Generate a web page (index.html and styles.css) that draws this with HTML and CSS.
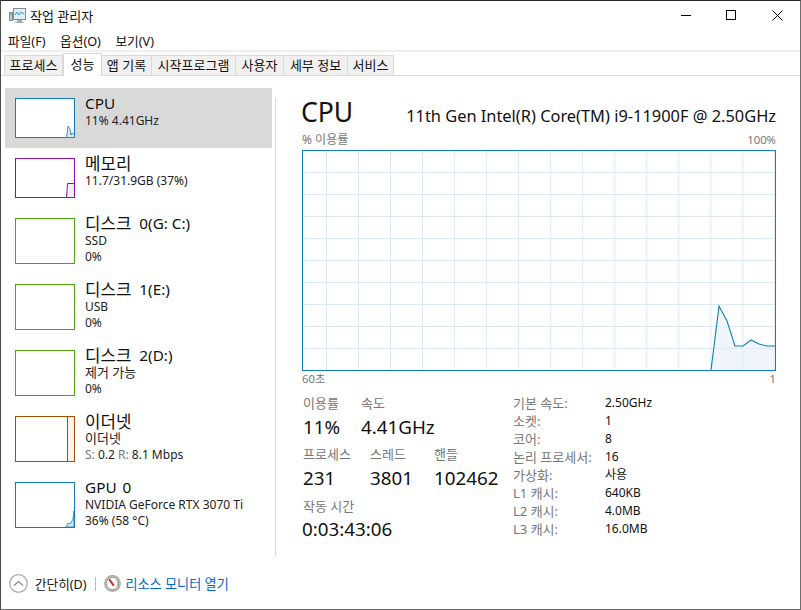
FILE: index.html
```html
<!DOCTYPE html>
<html lang="ko">
<head>
<meta charset="utf-8">
<title>작업 관리자</title>
<link rel="stylesheet" href="styles.css">
</head>
<body>
<div class="window">
  <header class="titlebar">
    <svg class="appicon" width="17" height="17" viewBox="0 0 17 17"><rect x="0.5" y="5.5" width="3" height="8" fill="#c4cdd1" stroke="#7d8a90"/><rect x="1" y="7" width="2" height="1" fill="#4fae4f"/><rect x="4.5" y="1.5" width="12" height="11" fill="#dff0fa" stroke="#7e8d94"/><path d="M6 8l2-3 2 3 2-3 3 2" fill="none" stroke="#2f8fd0"/><path d="M8 13h5v2h2v1H6v-1h2z" fill="#a3aeb3"/></svg>
    <span class="title">작업 관리자</span>
    <div class="winbtns">
      <svg width="11" height="11" viewBox="0 0 11 11"><path d="M0 5.5h10" stroke="#000"/></svg>
      <svg width="11" height="11" viewBox="0 0 11 11"><rect x="0.5" y="0.5" width="9" height="9" fill="none" stroke="#000"/></svg>
      <svg width="11" height="11" viewBox="0 0 11 11"><path d="M.5.5l10 10M10.5.5l-10 10" stroke="#000" fill="none"/></svg>
    </div>
  </header>
  <nav class="menubar"><span>파일(F)</span><span>옵션(O)</span><span>보기(V)</span></nav>
  <div class="tabs">
    <span class="tab w1">프로세스</span><span class="tab active">성능</span><span class="tab w2">앱 기록</span><span class="tab w3">시작프로그램</span><span class="tab w4">사용자</span><span class="tab w5">세부 정보</span><span class="tab w6">서비스</span>
  </div>
  <div class="content">
    <aside class="sidebar">
      <div class="item selected small">
        <svg class="thumb h40" viewBox="0 0 60 40"><rect x=".5" y=".5" width="59" height="39" fill="#fff" stroke="#117dbb"/><path d="M51.5 39.5L53 28 55 31 56 37 57 35 59.5 36V39.5Z" fill="#d7e8f3" stroke="#117dbb" stroke-width=".8"/></svg>
        <div class="info"><div class="name">CPU</div><div class="sub">11% 4.41GHz</div></div>
      </div>
      <div class="item small">
        <svg class="thumb h40" viewBox="0 0 60 40"><rect x=".5" y=".5" width="59" height="39" fill="#fff" stroke="#8b12ae"/><path d="M51.5 39.5l1-14h7v14z" fill="#f3edf6" stroke="#8b12ae"/></svg>
        <div class="info"><div class="name"><span class="ko">메모리</span></div><div class="sub">11.7/31.9GB (37%)</div></div>
      </div>
      <div class="item">
        <svg class="thumb h46" viewBox="0 0 60 46"><rect x=".5" y=".5" width="59" height="45" fill="#fff" stroke="#4da60c"/></svg>
        <div class="info"><div class="name"><span class="ko">디스크</span> 0(G: C:)</div><div class="sub">SSD</div><div class="sub">0%</div></div>
      </div>
      <div class="item">
        <svg class="thumb h46" viewBox="0 0 60 46"><rect x=".5" y=".5" width="59" height="45" fill="#fff" stroke="#4da60c"/></svg>
        <div class="info"><div class="name"><span class="ko">디스크</span> 1(E:)</div><div class="sub">USB</div><div class="sub">0%</div></div>
      </div>
      <div class="item">
        <svg class="thumb h46" viewBox="0 0 60 46"><rect x=".5" y=".5" width="59" height="45" fill="#fff" stroke="#4da60c"/></svg>
        <div class="info"><div class="name"><span class="ko">디스크</span> 2(D:)</div><div class="sub"><span class="ko">제거 가능</span></div><div class="sub">0%</div></div>
      </div>
      <div class="item">
        <svg class="thumb h46" viewBox="0 0 60 46"><rect x=".5" y=".5" width="59" height="45" fill="#fff" stroke="#a74f01"/><rect x="52.5" y=".5" width="7" height="45" fill="#fcf3eb" stroke="#a74f01"/></svg>
        <div class="info"><div class="name"><span class="ko">이더넷</span></div><div class="sub"><span class="ko">이더넷</span></div><div class="sub"><span class="dim">S:</span> 0.2 <span class="dim">R:</span> 8.1 Mbps</div></div>
      </div>
      <div class="item">
        <svg class="thumb h46" viewBox="0 0 60 46"><rect x=".5" y=".5" width="59" height="45" fill="#fff" stroke="#117dbb"/><path d="M51 45l2-4 2 1 2-3 1-2 1-8v16z" fill="#d7e8f3" stroke="#117dbb" stroke-width=".8"/></svg>
        <div class="info"><div class="name gpu">GPU 0</div><div class="sub">NVIDIA GeForce RTX 3070 Ti</div><div class="sub">36% (58 °C)</div></div>
      </div>
    </aside>
    <main class="panel">
      <div class="head"><h1>CPU</h1><div class="model">11th Gen Intel(R) Core(TM) i9-11900F @ 2.50GHz</div></div>
      <div class="axis"><span class="usage">% 이용률</span><span>100%</span></div>
      <svg class="chart" width="474" height="221" viewBox="302 150 474 221">
        <defs>
          <pattern id="grid" x="326" y="172" width="32.03" height="22" patternUnits="userSpaceOnUse">
            <path d="M.5 0v22M0 .5h33" stroke="#d9eaf4" fill="none"/>
          </pattern>
        </defs>
        <rect x="302" y="150" width="474" height="221" fill="url(#grid)"/>
        <path d="M711 370L719 306 727 321 735 346 743 346 751 340 759 344 767 346 775 346V370Z" fill="#e4eff7" fill-opacity=".6" stroke="none"/>
        <path d="M711 370L719 306 727 321 735 346 743 346 751 340 759 344 767 346 775 346" fill="none" stroke="#117dbb" stroke-width="1.1"/>
        <rect x="302.5" y="150.5" width="473" height="220" fill="none" stroke="#117dbb"/>
      </svg>
      <div class="axis under"><span>60초</span><span>1</span></div>
      <div class="stats">
        <div class="live">
          <div class="row">
            <div class="stat c1"><div class="lbl">이용률</div><div class="val">11%</div></div>
            <div class="stat"><div class="lbl">속도</div><div class="val">4.41GHz</div></div>
          </div>
          <div class="row second">
            <div class="stat c2"><div class="lbl">프로세스</div><div class="val">231</div></div>
            <div class="stat c3"><div class="lbl">스레드</div><div class="val">3801</div></div>
            <div class="stat"><div class="lbl">핸들</div><div class="val">102462</div></div>
          </div>
          <div class="row">
            <div class="stat"><div class="lbl">작동 시간</div><div class="val uptime">0:03:43:06</div></div>
          </div>
        </div>
        <dl class="specs">
          <dt>기본 속도:</dt><dd>2.50GHz</dd>
          <dt>소켓:</dt><dd>1</dd>
          <dt>코어:</dt><dd>8</dd>
          <dt>논리 프로세서:</dt><dd>16</dd>
          <dt>가상화:</dt><dd>사용</dd>
          <dt>L1 캐시:</dt><dd>640KB</dd>
          <dt>L2 캐시:</dt><dd>4.0MB</dd>
          <dt>L3 캐시:</dt><dd>16.0MB</dd>
        </dl>
      </div>
    </main>
  </div>
  <footer class="footer">
    <svg width="19" height="19" viewBox="0 0 19 19"><circle cx="9.5" cy="9.5" r="8.8" fill="#fff" stroke="#a8a8a8" stroke-width="1.2"/><path d="M5 11.5l4.5-4 4.5 4" fill="none" stroke="#8a8a8a" stroke-width="1.3"/></svg>
    <span class="less">간단히(D)</span>
    <span class="fsep"></span>
    <svg class="monitor" width="17" height="17" viewBox="0 0 17 17"><circle cx="8.5" cy="8.5" r="7.7" fill="#fff" stroke="#a9a69e" stroke-width="1.4"/><circle cx="8.5" cy="8.5" r="6.2" fill="none" stroke="#55524c" stroke-width=".7"/><path d="M12.8 5.5a5 5 0 0 1 0 6" fill="none" stroke="#e9a15a" stroke-width="1"/><path d="M5.2 4.2L9.8 10.8" stroke="#cf2a1e" stroke-width="2"/></svg>
    <span class="link">리소스 모니터 열기</span>
  </footer>
</div>
</body>
</html>
```
FILE: styles.css
```css
* { box-sizing: border-box; }
html, body { margin: 0; padding: 0; }
body { width: 801px; height: 610px; overflow: hidden; background: #fff; font-family: "Noto Sans", "Noto Sans CJK KR", sans-serif; color: #1a1a1a; }
.window { width: 801px; height: 610px; border: 1px solid #6f6f6f; border-top-color: #2a2a2a; border-left-color: #4a4a4a; display: flex; flex-direction: column; background: #fff; overflow: hidden; }
.titlebar { height: 29px; display: flex; align-items: center; padding-left: 8px; flex: none; }
.appicon { margin-right: 4px; }
.title { font-size: 13px; color: #111; }
.winbtns { margin-left: auto; display: flex; gap: 34px; padding-right: 17px; }
.winbtns svg:last-child { margin-left: 1px; }
.menubar { height: 20px; display: flex; gap: 14.5px; padding-left: 7px; align-items: center; font-size: 12.7px; flex: none; color: #111; }
.tabs { flex: none; height: 26px; border-top: 2px solid #f0f0f0; border-bottom: 1px solid #d9d9d9; background: #fff; display: flex; padding-left: 3px; align-items: flex-end; }
.tab { height: 21px; margin-bottom: -1px; background: #f0f0f0; border: 1px solid #d9d9d9; border-left: 0; font-size: 13px; line-height: 19px; text-align: center; color: #111; white-space: nowrap; }
.w1 { width: 59px; border-left: 1px solid #d9d9d9; }
.w2 { width: 50px; border-left: 0; }
.w3 { width: 84px; }
.w4 { width: 48px; }
.w5 { width: 64px; }
.w6 { width: 46px; }
.active { width: 39px; height: 23px; background: #fff; border: 1px solid #d9d9d9; border-bottom: 0; margin-bottom: -1px; line-height: 20px; }
.content { flex: 1; display: flex; min-height: 0; padding-top: 12px; }
.sidebar { width: 274px; flex: none; padding-left: 4px; padding-right: 3px; }
.item { display: flex; height: 66px; padding: 10px 0 0 10px; gap: 10px; }
.item.small { height: 60px; }
.selected { background: #d9d9d9; }
.thumb { display: block; width: 60px; flex: none; }
.h40 { height: 40px; }
.h46 { height: 46px; }
.info { margin-top: -5px; white-space: nowrap; }
.name { font-size: 15.3px; line-height: 20px; height: 20px; color: #111; }
.name .ko { font-size: 16.8px; margin-right: 4px; vertical-align: -1px; }
.gpu { word-spacing: 2px; }
.sub { font-size: 12px; line-height: 15.5px; color: #222; }
.sub .ko { font-size: 13px; }
.dim { color: #777; }
.panel { flex: 1; border-left: 1px solid #d9d9d9; margin-top: 10px; padding-left: 26px; padding-right: 24px; height: 458px; }
.head { display: flex; justify-content: space-between; align-items: baseline; margin-top: -4px; height: 39px; }
h1 { font-size: 26.5px; font-weight: 400; line-height: 37px; margin: 0 0 0 -1px; color: #111; }
.model { font-size: 16.4px; color: #111; white-space: nowrap; }
.axis { display: flex; justify-content: space-between; font-size: 11.3px; line-height: 14px; color: #777; height: 17px; }
.usage { font-size: 12px; }
.chart { display: block; }
.under { margin-top: 1px; }
.stats { display: flex; margin-top: 6px; padding-left: 1px; }
.live { width: 210px; flex: none; }
.row { display: flex; height: 51px; }
.row.second { height: 52px; }
.stat { min-width: 0; }
.c1 { width: 58px; }
.c2 { width: 67px; }
.c3 { width: 64px; }
.lbl { font-size: 13px; line-height: 17px; color: #777; }
.val { font-size: 18.8px; line-height: 26px; color: #111; margin-top: 2px; }
.uptime { margin-top: 1px; margin-left: -1px; }
.specs { margin: -1px 0 0; display: grid; grid-template-columns: 92px auto; grid-auto-rows: 18px; font-size: 13px; line-height: 18px; }
.specs dt { color: #777; white-space: nowrap; }
.specs dd { margin: 0; color: #111; font-size: 12px; }
.footer { height: 51px; flex: none; display: flex; align-items: center; padding: 0 0 0 8px; font-size: 12.6px; }
.less { margin-left: 7px; color: #111; }
.fsep { width: 1px; height: 14px; background: #bbb; margin: 0 8px; }
.link { margin-left: 5px; color: #0066cc; font-size: 13.1px; }
```
